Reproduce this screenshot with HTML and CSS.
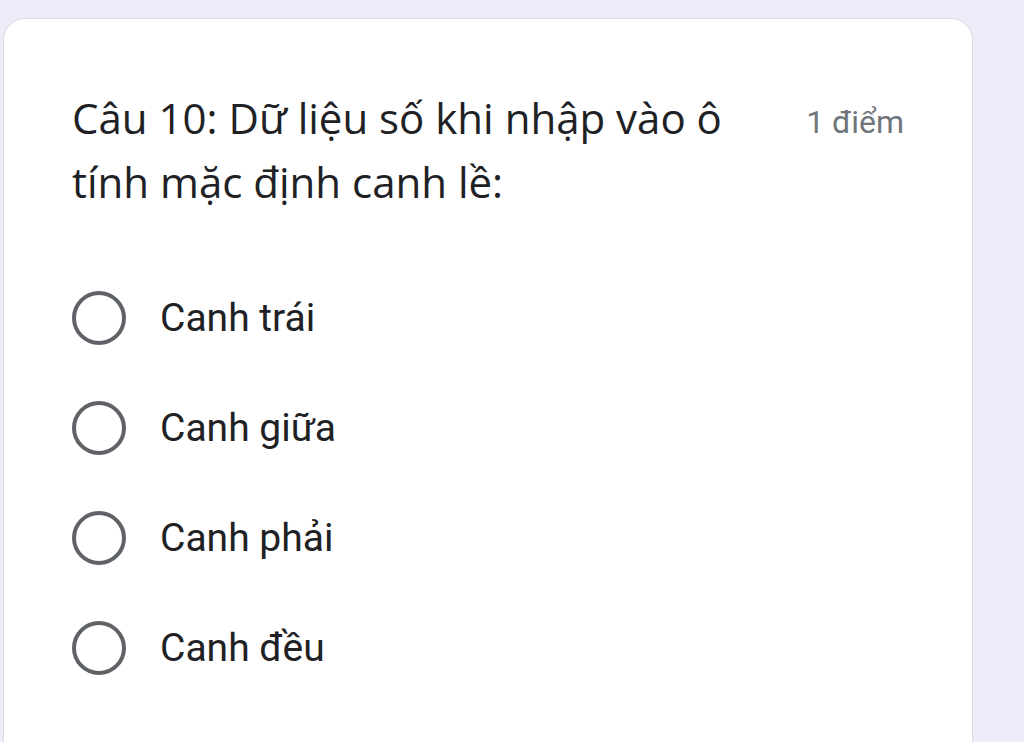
FILE: index.html
```html
<!DOCTYPE html>
<html lang="vi">
<head>
<meta charset="utf-8">
<link rel="stylesheet" href="styles.css">
</head>
<body>
<div class="card">
  <div class="header">
    <div class="title">Câu 10: Dữ liệu số khi nhập vào ô tính mặc định canh lề:</div>
    <div class="points">1 điểm</div>
  </div>
  <div class="options">
    <div class="option"><span class="radio"></span><span class="label">Canh trái</span></div>
    <div class="option"><span class="radio"></span><span class="label">Canh giữa</span></div>
    <div class="option"><span class="radio"></span><span class="label">Canh phải</span></div>
    <div class="option"><span class="radio"></span><span class="label">Canh đều</span></div>
  </div>
</div>
</body>
</html>
```
FILE: styles.css
```css
html, body {
  margin: 0;
  padding: 0;
  background: #eeeaf8;
  height: 742px;
  overflow: hidden;
}
.card {
  margin: 18px 0 0 3px;
  width: 968px;
  height: 800px;
  background: #ffffff;
  border: 1px solid #dadce0;
  border-radius: 22px;
  box-sizing: content-box;
  padding: 0;
}
.header {
  display: flex;
  justify-content: space-between;
  align-items: flex-start;
  padding: 67px 68px 0 68px;
}
.title {
  font-family: "Open Sans", sans-serif;
  font-size: 42px;
  line-height: 64px;
  color: #202124;
  width: 690px;
}
.points {
  font-family: Roboto, sans-serif;
  font-size: 32px;
  line-height: 64px;
  color: #70757a;
  padding-top: 4px;
}
.options {
  display: flex;
  flex-direction: column;
  padding: 49px 0 0 68px;
}
.option {
  display: flex;
  align-items: center;
  height: 110px;
}
.radio {
  width: 46px;
  height: 46px;
  border: 4px solid #5f6368;
  border-radius: 50%;
  box-sizing: content-box;
  flex: none;
}
.label {
  margin-left: 34px;
  font-family: Roboto, sans-serif;
  font-size: 39px;
  color: #202124;
}
```
